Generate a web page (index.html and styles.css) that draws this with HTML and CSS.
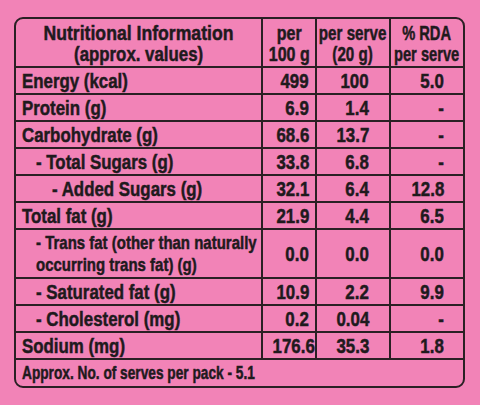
FILE: index.html
```html
<!DOCTYPE html>
<html lang="en">
<head>
<meta charset="utf-8">
<title>Nutritional Information</title>
<link rel="stylesheet" href="styles.css">
</head>
<body>
<div class="panel">
  <table class="nutri">
    <colgroup>
      <col class="c-name"><col class="c-100"><col class="c-serve"><col class="c-rda">
    </colgroup>
    <thead>
      <tr class="head">
        <th><div class="hc"><span class="t hn">Nutritional Information<br><span class="sub">(approx. values)</span></span></div></th>
        <th><div class="hc"><span class="t h2">per<br>100 g</span></div></th>
        <th><div class="hc"><span class="t h3">per serve<br>(20 g)</span></div></th>
        <th class="last"><div class="hc"><span class="t h4">% RDA<br>per serve</span></div></th>
      </tr>
    </thead>
    <tbody>
      <tr><td class="name"><span class="t">Energy (kcal)</span></td><td class="v100"><span class="t">499</span></td><td class="vs"><span class="t">100</span></td><td class="vr last"><span class="t">5.0</span></td></tr>
      <tr><td class="name"><span class="t">Protein (g)</span></td><td class="v100"><span class="t">6.9</span></td><td class="vs"><span class="t">1.4</span></td><td class="vr last"><span class="t">-</span></td></tr>
      <tr><td class="name"><span class="t">Carbohydrate (g)</span></td><td class="v100"><span class="t">68.6</span></td><td class="vs"><span class="t">13.7</span></td><td class="vr last"><span class="t">-</span></td></tr>
      <tr><td class="name ind1"><span class="t">- Total Sugars (g)</span></td><td class="v100"><span class="t">33.8</span></td><td class="vs"><span class="t">6.8</span></td><td class="vr last"><span class="t">-</span></td></tr>
      <tr><td class="name ind2"><span class="t">- Added Sugars (g)</span></td><td class="v100"><span class="t">32.1</span></td><td class="vs"><span class="t">6.4</span></td><td class="vr last"><span class="t">12.8</span></td></tr>
      <tr><td class="name"><span class="t">Total fat (g)</span></td><td class="v100"><span class="t">21.9</span></td><td class="vs"><span class="t">4.4</span></td><td class="vr last"><span class="t">6.5</span></td></tr>
      <tr class="trans"><td class="name ind1"><span class="t small">- Trans fat (other than naturally<br>occurring trans fat) (g)</span></td><td class="v100"><span class="t">0.0</span></td><td class="vs"><span class="t">0.0</span></td><td class="vr last"><span class="t">0.0</span></td></tr>
      <tr><td class="name ind1"><span class="t">- Saturated fat (g)</span></td><td class="v100"><span class="t">10.9</span></td><td class="vs"><span class="t">2.2</span></td><td class="vr last"><span class="t">9.9</span></td></tr>
      <tr><td class="name ind1"><span class="t">- Cholesterol (mg)</span></td><td class="v100"><span class="t">0.2</span></td><td class="vs"><span class="t">0.04</span></td><td class="vr last"><span class="t">-</span></td></tr>
      <tr><td class="name"><span class="t">Sodium (mg)</span></td><td class="v100"><span class="t">176.6</span></td><td class="vs"><span class="t">35.3</span></td><td class="vr last"><span class="t">1.8</span></td></tr>
    </tbody>
    <tfoot>
      <tr class="foot"><td colspan="4" class="note last"><span class="t">Approx. No. of serves per pack - 5.1</span></td></tr>
    </tfoot>
  </table>
</div>
</body>
</html>
```

FILE: styles.css
```css
html, body {
  margin: 0;
  padding: 0;
}
body {
  background: #f283b7;
  width: 480px;
  height: 405px;
  overflow: hidden;
  font-family: "Liberation Sans", Arial, sans-serif;
  font-weight: bold;
  color: #1f1a1d;
}
.panel {
  margin: 17px 0 0 14px;
  width: 447px;
  border: 2px solid #2a2024;
  border-radius: 9px;
  overflow: hidden;
}
.nutri {
  width: 447px;
  border-collapse: separate;
  border-spacing: 0;
  table-layout: fixed;
}
.c-name { width: 247px; }
.c-100 { width: 54px; }
.c-serve { width: 74px; }
.c-rda { width: 72px; }

.nutri th, .nutri td {
  padding: 0;
  border-right: 2px solid #2a2024;
  border-bottom: 2px solid #2a2024;
  vertical-align: middle;
  white-space: nowrap;
  overflow: visible;
}
.nutri .last { border-right: none; }
.foot td { border-bottom: none; }

/* condensed text: Liberation Sans Bold squeezed horizontally */
.t {
  display: inline-block;
  transform: scaleX(0.815);
  transform-origin: left center;
  -webkit-text-stroke: 0.5px #1f1a1d;
}
.v100 .t, .vs .t, .vr .t { transform-origin: right center; }

.head th {
  height: 46px;
  font-size: 20.5px;
  line-height: 21px;
  font-weight: bold;
  padding-top: 1px;
}
.hc {
  display: flex;
  justify-content: center;
}
.head .t {
  transform-origin: center center;
  text-align: center;
  line-height: 21px;
}
.head .hn { transform: scaleX(0.86); }
.head .hn .sub { display: inline-block; transform: scaleX(0.955); }
.head .h2 { transform: scaleX(0.78); }
.head .h3 { transform: scaleX(0.74); }
.head .h4 { transform: scaleX(0.715); }

.nutri tbody td {
  height: 25px;
  font-size: 20.7px;
  line-height: 22px;
}
.nutri tbody tr.trans td {
  height: 47px;
}
.name {
  text-align: left;
  padding-left: 6px !important;
}
.ind1 { padding-left: 20px !important; }
.ind2 { padding-left: 36px !important; }
.t.small {
  font-size: 18.5px;
  line-height: 22px;
  transform: scaleX(0.81);
}
.v100 { text-align: right; padding-right: 6px !important; }
.vs { text-align: right; padding-right: 20px !important; }
.vr { text-align: right; padding-right: 19px !important; }

.note {
  height: 26px;
  font-size: 18.5px;
  line-height: 20px;
  padding-left: 6px !important;
  text-align: left;
}
.note .t { transform: scaleX(0.74); }
```
